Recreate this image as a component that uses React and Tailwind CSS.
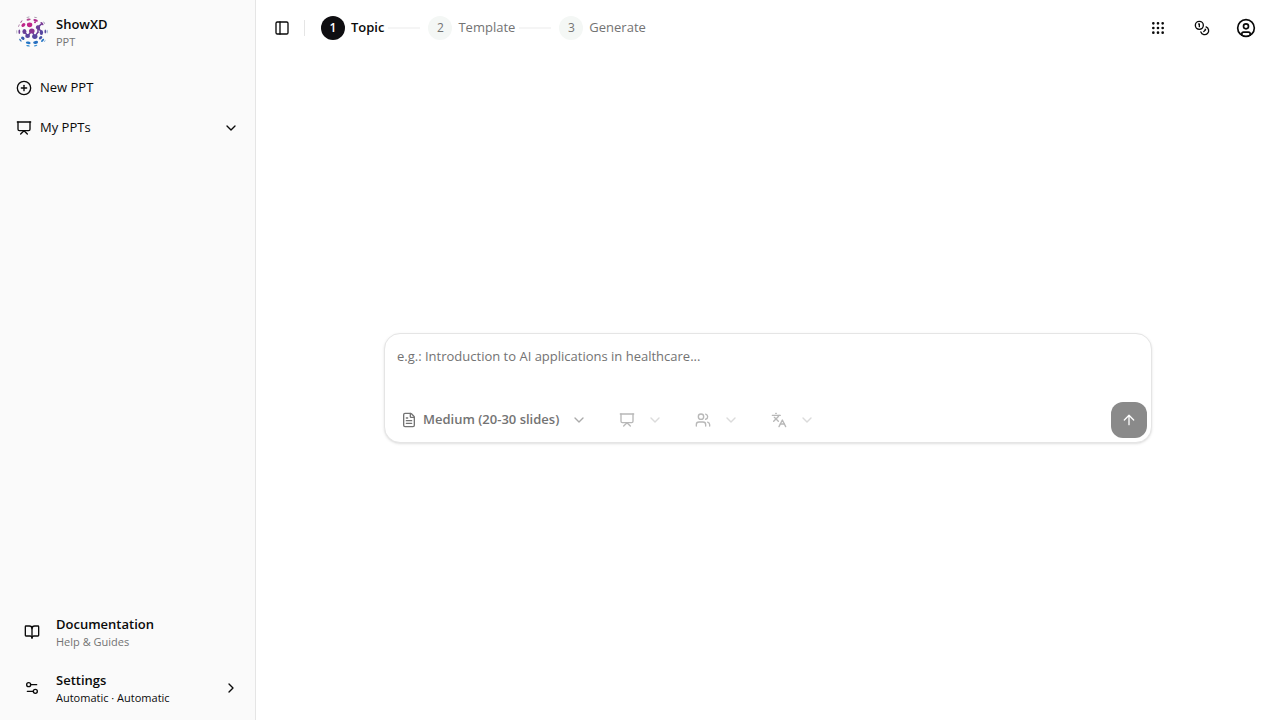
import React, { useState } from 'react';
import {
  ArrowUp,
  BookOpen,
  ChevronDown,
  ChevronRight,
  CirclePlus,
  CircleUser,
  Coins,
  FileText,
  Grip,
  Languages,
  PanelLeft,
  Presentation,
  Settings2,
  Users,
} from 'lucide-react';

const steps = ['Topic', 'Template', 'Generate'];

// cx, cy, rx, ry, rotation, color
const logoDots = [
  [12, 1.2, 1.7, 0.5, -12, '#a79cae'],
  [19.6, 1.4, 1.7, 0.5, 14, '#a79cae'],
  [12.6, 3.6, 2.1, 1, -8, '#b0468f'],
  [19.6, 4.4, 2.3, 1.3, 14, '#b02a8e'],
  [5.4, 5.6, 1.6, 0.5, -50, '#a8609a'],
  [7.4, 9, 2.2, 1.7, -40, '#bf2789'],
  [13.6, 8.8, 2.7, 2.4, 0, '#c02488'],
  [19, 6.4, 1, 0.8, 0, '#b02a8e'],
  [22, 11.4, 2.2, 2.1, 30, '#6a3f98'],
  [26, 7.6, 2, 1, 50, '#7d3c97'],
  [28.2, 6.8, 1.5, 0.4, 55, '#9a92ad'],
  [2.9, 9.6, 1.5, 0.5, -65, '#b080a8'],
  [0.8, 15.8, 0.4, 1.9, 0, '#a5a1b3'],
  [3.3, 15.8, 0.9, 2.2, 0, '#704299'],
  [8.4, 15.6, 2, 2.5, 0, '#683f97'],
  [15.8, 15, 2.8, 2.5, 0, '#8a3492'],
  [25.4, 16.4, 1.7, 2.5, 0, '#5546a0'],
  [29.3, 15.6, 0.8, 2, 0, '#594a9f'],
  [31.1, 15.6, 0.4, 1.8, 0, '#5478b5'],
  [11.6, 20, 2.4, 2.1, 0, '#5b459e'],
  [18.8, 20.6, 2.7, 2.3, 0, '#55479f'],
  [6.8, 22.2, 1.9, 1.5, 40, '#385bad'],
  [24.6, 21.8, 1.9, 1.4, -40, '#4352a7'],
  [4.4, 24.2, 1.8, 0.7, 50, '#3778bc'],
  [26.6, 24.4, 2, 1, -50, '#2375c4'],
  [28.8, 24.9, 1.3, 0.4, -55, '#8fb5da'],
  [12.2, 26.8, 2.4, 1.3, 8, '#2476c6'],
  [19.6, 26.4, 2.5, 1.5, -10, '#266fc0'],
  [12, 29.8, 1.9, 0.7, 10, '#3e92d3'],
  [19.6, 29.6, 1.8, 0.7, -12, '#3e92d3'],
];

const Logo = () => (
  <svg viewBox="0 0 32 32" className="size-8 shrink-0" aria-hidden="true">
    <path
      d="M22 11l4-3.4M22 11l3.4 5.4M22 11v6M8.4 15.4l3.2 4.6 4.2-5M15.8 15l3 5.6L22 16"
      fill="none"
      stroke="#6b4099"
      strokeWidth="1.5"
    />
    {logoDots.map(([cx, cy, rx, ry, rotate, color], index) => (
      <ellipse key={index} cx={cx} cy={cy} rx={rx} ry={ry} fill={color} transform={`rotate(${rotate} ${cx} ${cy})`} />
    ))}
  </svg>
);

const Sidebar = () => (
  <aside className="flex w-64 shrink-0 flex-col justify-between border-r border-neutral-200 bg-neutral-50 p-2">
    <div>
      <a href="#home" className="flex h-12 items-center gap-2 px-2">
        <Logo />
        <span className="flex flex-col">
          <span className="text-[13px] leading-5 font-semibold">ShowXD</span>
          <span className="text-[11px] leading-4 text-neutral-500">PPT</span>
        </span>
      </a>
      <nav className="mt-4 flex flex-col gap-2">
        <a href="#new" className="flex h-8 items-center gap-2 px-2 text-[13px]">
          <CirclePlus className="size-4" />
          New PPT
        </a>
        <button type="button" className="flex h-8 items-center gap-2 px-2 text-[13px]">
          <Presentation className="size-4" />
          My PPTs
          <ChevronDown className="ml-auto size-4" />
        </button>
      </nav>
    </div>
    <div className="flex flex-col gap-2">
      <a href="#docs" className="flex h-12 items-center gap-4 px-4">
        <BookOpen className="size-4" />
        <span className="flex flex-col">
          <span className="text-[13px] leading-5 font-semibold">Documentation</span>
          <span className="text-[11px] leading-4 text-neutral-500">Help &amp; Guides</span>
        </span>
      </a>
      <button type="button" className="flex h-12 items-center gap-4 pr-2 pl-4 text-left">
        <Settings2 className="size-4" />
        <span className="flex flex-col">
          <span className="text-[13px] leading-5 font-semibold">Settings</span>
          <span className="text-[11px] leading-4">Automatic · Automatic</span>
        </span>
        <ChevronRight className="ml-auto size-4" />
      </button>
    </div>
  </aside>
);

const Steps = ({ current }) => (
  <ol className="flex items-center gap-2 text-[13px]">
    {steps.map((step, index) => (
      <li key={step} className="flex items-center gap-1">
        <span className={`flex items-center gap-1.5 ${index === current ? 'font-semibold' : 'text-neutral-500'}`}>
          <span
            className={`flex size-6 items-center justify-center rounded-full text-xs ${
              index === current ? 'bg-[#0f0e11] text-white' : 'bg-[#f4f7f5]'
            }`}
          >
            {index + 1}
          </span>
          {step}
        </span>
        {index < steps.length - 1 && <span className="h-0.5 w-8 bg-neutral-100" />}
      </li>
    ))}
  </ol>
);

const IconButton = ({ label, children }) => (
  <button type="button" aria-label={label} className="flex size-9 items-center justify-center rounded-md">
    {children}
  </button>
);

const Header = () => (
  <header className="flex h-14 items-center pr-4 pl-3">
    <button type="button" aria-label="Toggle sidebar" className="flex size-7 items-center justify-center">
      <PanelLeft className="size-4" />
    </button>
    <div className="mr-4 ml-2 h-4 w-px bg-neutral-200" />
    <Steps current={0} />
    <div className="ml-auto flex gap-2">
      <IconButton label="Apps">
        <Grip className="size-4" />
      </IconButton>
      <IconButton label="Credits">
        <Coins className="size-4" />
      </IconButton>
      <IconButton label="Account">
        <CircleUser className="size-5" />
      </IconButton>
    </div>
  </header>
);

const IconSelect = ({ label, icon: Icon, options }) => (
  <label className="relative flex h-9 items-center gap-3 px-3 text-neutral-500 opacity-50">
    <Icon className="size-4" />
    <ChevronDown className="size-4 opacity-50" />
    <select aria-label={label} disabled className="absolute inset-0 w-full opacity-0">
      {options.map((option) => (
        <option key={option}>{option}</option>
      ))}
    </select>
  </label>
);

const PromptBox = () => {
  const [topic, setTopic] = useState('');
  const [length, setLength] = useState('Medium (20-30 slides)');

  return (
    <form
      onSubmit={(e) => e.preventDefault()}
      className="w-full max-w-3xl rounded-2xl border border-neutral-200 bg-white shadow-sm"
    >
      <textarea
        aria-label="Topic"
        value={topic}
        onChange={(e) => setTopic(e.target.value)}
        placeholder="e.g.: Introduction to AI applications in healthcare..."
        className="block h-17 w-full resize-none p-3 text-[13px] leading-5 outline-none placeholder:text-neutral-500"
      />
      <div className="flex items-center gap-2 px-1 pb-1">
        <label className="relative flex h-9 items-center gap-1.5 px-3 text-neutral-500">
          <FileText className="size-4" />
          <select
            aria-label="Length"
            value={length}
            onChange={(e) => setLength(e.target.value)}
            className="w-41 appearance-none pr-5 text-[13px] font-semibold outline-none"
          >
            <option>Short (10-20 slides)</option>
            <option>Medium (20-30 slides)</option>
            <option>Long (30-40 slides)</option>
          </select>
          <ChevronDown className="pointer-events-none absolute right-3 size-4 opacity-60" />
        </label>
        <IconSelect label="Scene" icon={Presentation} options={['General']} />
        <IconSelect label="Audience" icon={Users} options={['Everyone']} />
        <IconSelect label="Language" icon={Languages} options={['Automatic']} />
        <button
          type="submit"
          aria-label="Send"
          disabled={!topic}
          className="ml-auto flex size-9 items-center justify-center rounded-xl bg-[#171717] text-white disabled:opacity-50"
        >
          <ArrowUp className="size-4" />
        </button>
      </div>
    </form>
  );
};

const App = () => (
  <div className="flex min-h-screen bg-white font-['Open_Sans',sans-serif] text-neutral-950">
    <Sidebar />
    <div className="flex min-w-0 flex-1 flex-col">
      <Header />
      <main className="flex flex-1 items-center justify-center px-4">
        <PromptBox />
      </main>
    </div>
  </div>
);

export default App;
